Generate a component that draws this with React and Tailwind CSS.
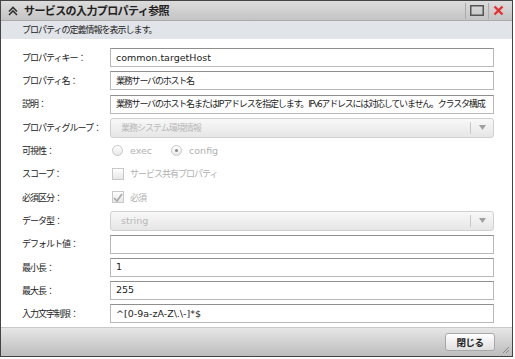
import React from "react";

const jp = { fontFamily: '"Noto Sans CJK JP", "Noto Sans", sans-serif' };
const lat = { fontFamily: '"DejaVu Sans", "Noto Sans CJK JP", sans-serif' };

function Row({ label, children }) {
  return (
    <div className="flex items-center h-[23.3px]">
      <div className="w-[88px] shrink-0 text-[9px] tracking-[-1px] text-[#222] whitespace-nowrap" style={jp}>{label}</div>
      <div className="flex-1 flex items-center min-w-0">{children}</div>
    </div>
  );
}

function Input({ value, jpText }) {
  return (
    <div
      className={
        "w-full h-[19px] border border-[#b8b8b8] border-t-[#8f8f8f] bg-white px-[5px] flex items-center text-[#222] whitespace-nowrap overflow-hidden " +
        (jpText ? "text-[9px] tracking-[-1.2px]" : "text-[9.5px]")
      }
      style={jpText ? jp : lat}
    >
      {value}
    </div>
  );
}

function Select({ value, jpText }) {
  return (
    <div
      className={
        "w-full h-[20px] border border-[#d0d0d0] rounded-[3px] bg-gradient-to-b from-[#f8f8f8] to-[#e6e6e6] flex items-center text-[#b8b8b8] " +
        (jpText ? "text-[9px] tracking-[-1px]" : "text-[9.5px]")
      }
      style={jpText ? jp : lat}
    >
      <div className="flex-1 px-[10px]">{value}</div>
      <div className="w-px h-[12px] bg-[#c8c8c8]" />
      <div className="w-[22px] flex justify-center">
        <svg width="7" height="5" viewBox="0 0 7 5"><path d="M0 0h7L3.5 5z" fill="#a0a0a0" /></svg>
      </div>
    </div>
  );
}

export default function App() {
  return (
    <div className="w-[515px] h-[359px] bg-white">
      <div className="w-[513px] h-[357px] bg-white border border-[#444] flex flex-col overflow-hidden">
        {/* title */}
        <div className="h-[20px] shrink-0 bg-gradient-to-b from-[#dcdcdc] to-[#c4c4c4] flex items-center pl-[7px] pr-[8px] border-b border-[#aaa]">
          <svg width="10" height="10" viewBox="0 0 10 10" className="mr-[6px]">
            <path d="M1 5.5L5 1.5L9 5.5M1 9L5 5L9 9" stroke="#333" strokeWidth="1.6" fill="none" />
          </svg>
          <div className="text-[11px] font-bold tracking-[-0.6px] text-[#222] flex-1" style={jp}>サービスの入力プロパティ参照</div>
          <div className="w-px h-[16px] bg-[#aaa] mr-[4px]" />
          <svg width="14" height="11" viewBox="0 0 14 11" className="mr-[4px]">
            <rect x="0.75" y="0.75" width="12.5" height="9.5" fill="none" stroke="#555" strokeWidth="1.5" />
          </svg>
          <div className="w-px h-[16px] bg-[#aaa] mr-[4px]" />
          <svg width="11" height="11" viewBox="0 0 11 11">
            <path d="M1.5 1.5L9.5 9.5M9.5 1.5L1.5 9.5" stroke="#e53030" strokeWidth="2.4" />
          </svg>
        </div>
        {/* description band */}
        <div className="h-[18px] shrink-0 bg-[#e1e4e8] flex items-center pl-[21px] text-[9px] tracking-[-1px] text-[#222]" style={jp}>
          プロパティの定義情報を表示します。
        </div>
        {/* form */}
        <div className="flex-1 pl-[21px] pr-[18px] pt-[7px] flex flex-col">
          <Row label="プロパティキー："><Input value="common.targetHost" /></Row>
          <Row label="プロパティ名："><Input value="業務サーバのホスト名" jpText /></Row>
          <Row label="説明："><Input value="業務サーバのホスト名またはIPアドレスを指定します。IPv6アドレスには対応していません。クラスタ構成" jpText /></Row>
          <Row label="プロパティグループ："><Select value="業務システム環境情報" jpText /></Row>
          <Row label="可視性：">
            <div className="flex items-center text-[9.5px] text-[#b0b0b0] pl-[2px]" style={lat}>
              <span className="w-[11px] h-[11px] rounded-full border border-[#c8c8c8] bg-gradient-to-b from-white to-[#e8e8e8] mr-[7px]" />
              <span className="mr-[19px]">exec</span>
              <span className="w-[11px] h-[11px] rounded-full border border-[#c8c8c8] bg-gradient-to-b from-white to-[#e8e8e8] mr-[7px] flex items-center justify-center">
                <span className="w-[3px] h-[3px] rounded-full bg-[#888]" />
              </span>
              <span>config</span>
            </div>
          </Row>
          <Row label="スコープ：">
            <div className="flex items-center text-[9px] tracking-[-1px] text-[#b0b0b0] pl-[2px]" style={jp}>
              <span className="w-[12px] h-[12px] border border-[#c8c8c8] bg-gradient-to-b from-white to-[#e6e6e6] mr-[6px]" />
              サービス共有プロパティ
            </div>
          </Row>
          <Row label="必須区分：">
            <div className="flex items-center text-[9px] tracking-[-1px] text-[#b0b0b0] pl-[2px]" style={jp}>
              <span className="w-[12px] h-[12px] border border-[#c8c8c8] bg-gradient-to-b from-white to-[#e6e6e6] mr-[6px] flex items-center justify-center">
                <svg width="10" height="9" viewBox="0 0 10 9"><path d="M1 5L4 8L9 1" stroke="#a8a8a8" strokeWidth="1.6" fill="none" /></svg>
              </span>
              必須
            </div>
          </Row>
          <Row label="データ型："><Select value="string" /></Row>
          <Row label="デフォルト値："><Input value="" /></Row>
          <Row label="最小長："><Input value="1" /></Row>
          <Row label="最大長："><Input value="255" /></Row>
          <Row label="入力文字制限："><Input value="^[0-9a-zA-Z\.\-]*$" /></Row>
        </div>
        {/* footer */}
        <div className="h-[29px] shrink-0 bg-gradient-to-b from-[#e6e6e6] to-[#bdbdbd] border-t border-[#c8c8c8] flex items-center justify-end relative">
          <div className="w-[50px] h-[18px] mr-[17px] rounded-[3px] border border-[#a8a8a8] bg-gradient-to-b from-white to-[#e0e0e0] flex items-center justify-center text-[9.5px] font-bold tracking-[-0.5px] text-[#222]" style={jp}>
            閉じる
          </div>
          <svg width="9" height="9" viewBox="0 0 9 9" className="absolute right-[2px] bottom-[2px]">
            <path d="M8 2L2 8M8 5L5 8" stroke="#888" strokeWidth="1" />
          </svg>
        </div>
      </div>
    </div>
  );
}
